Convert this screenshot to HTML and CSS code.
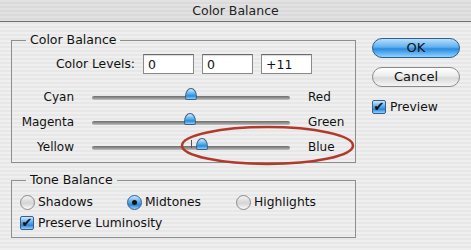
FILE: index.html
```html
<!DOCTYPE html>
<html>
    <head>
        <meta charset="utf-8">
        <link rel="stylesheet" href="styles.css">
    </head>
    <body>
        <div class="dialog">
            <div class="titlebar">Color Balance</div>
            <div class="content">
                <div class="panels">
                    <fieldset class="group">
                        <legend class="group__title">Color Balance</legend>
                        <div class="group__body group__body_balance">
                            <div class="levels">
                                <span class="levels__label">Color Levels:</span>
                                <input class="levels__input" type="text" value="0">
                                <input class="levels__input" type="text" value="0">
                                <input class="levels__input" type="text" value="+11">
                            </div>
                            <div class="slider-row">
                                <span class="slider-row__left">Cyan</span>
                                <div class="track">
                                    <span class="thumb" style="left: 50%"></span>
                                </div>
                                <span class="slider-row__right">Red</span>
                            </div>
                            <div class="slider-row">
                                <span class="slider-row__left">Magenta</span>
                                <div class="track">
                                    <span class="thumb" style="left: 49.5%"></span>
                                </div>
                                <span class="slider-row__right">Green</span>
                            </div>
                            <div class="slider-row">
                                <span class="slider-row__left">Yellow</span>
                                <div class="track">
                                    <span class="track__tick"></span>
                                    <span class="thumb" style="left: 55.5%"></span>
                                </div>
                                <span class="slider-row__right">Blue</span>
                            </div>
                        </div>
                    </fieldset>
                    <fieldset class="group group_tone">
                        <legend class="group__title">Tone Balance</legend>
                        <div class="group__body group__body_tone">
                            <div class="radios">
                                <label class="radio"><span class="radio__dot"></span>Shadows</label>
                                <label class="radio"><span class="radio__dot radio__dot_on"></span>Midtones</label>
                                <label class="radio"><span class="radio__dot"></span>Highlights</label>
                            </div>
                            <label class="check"><span class="check__box">&#10004;</span>Preserve Luminosity</label>
                        </div>
                    </fieldset>
                </div>
                <div class="buttons">
                    <div class="button button_default">OK</div>
                    <div class="button">Cancel</div>
                    <label class="check check_preview"><span class="check__box">&#10004;</span>Preview</label>
                </div>
            </div>
            <!-- red marker drawn over the Yellow/Blue slider -->
            <svg class="mark" width="175" height="42" viewBox="0 0 175 42">
                <ellipse cx="87.5" cy="20.5" rx="85.5" ry="18.5" fill="none" stroke="#b23a2c" stroke-width="2.6"/>
            </svg>
        </div>
    </body>
</html>
```

FILE: styles.css
```css
body, html {
    margin: 0;
    box-sizing: border-box;
    font-family: "DejaVu Sans", "Liberation Sans", sans-serif;
    font-size: 12.3px;
    color: #111;
}

* {
    box-sizing: border-box;
}

.dialog {
    position: relative;
    width: 471px;
    height: 250px;
    overflow: hidden;
    background: repeating-linear-gradient(#efefef 0 2px, #e7e7e7 2px 4px);
}

.mark {
    position: absolute;
    left: 180px;
    top: 125px;
}

.titlebar {
    height: 22px;
    line-height: 21px;
    text-align: center;
    font-size: 12.5px;
    color: #222;
    border-bottom: 1px solid #6e6e6e;
    background: repeating-linear-gradient(#e2e2e2 0 2px, #dadada 2px 4px);
}

.content {
    display: flex;
    padding: 11px 0 0 11px;
}

.panels {
    width: 345px;
}

.group {
    margin: 0;
    padding: 0;
    border: 1px solid #8e8e8e;
    min-width: 0;
}

.group_tone {
    margin-top: 10px;
}

.group__title {
    margin-left: 14px;
    padding: 0 4px;
    line-height: 14px;
    font-size: 12.5px;
}

.group__body_balance {
    padding: 7px 0 3px 0;
}

.group__body_tone {
    padding: 5px 0 4px 8px;
}

.levels {
    display: flex;
    align-items: center;
    height: 20px;
}

.levels__label {
    width: 123px;
    text-align: right;
}

.levels__input {
    width: 51px;
    height: 20px;
    margin-left: 8px;
    padding: 0 4px;
    border: 1px solid #8a8a8a;
    border-top-color: #6a6a6a;
    background-color: #fff;
    box-shadow: inset 0 1px 1px rgba(0, 0, 0, 0.15);
    font-family: "DejaVu Sans", sans-serif;
    font-size: 12.5px;
    color: #111;
    outline: none;
}

.slider-row {
    display: flex;
    align-items: center;
    height: 25px;
}

.levels + .slider-row {
    margin-top: 10px;
}

.slider-row__left {
    width: 62px;
    text-align: right;
    font-size: 12px;
}

.slider-row__right {
    margin-left: 18px;
    font-size: 12px;
}

.track {
    position: relative;
    width: 198px;
    height: 4px;
    margin-left: 18px;
    margin-top: 2px;
    border-radius: 2px;
    background: linear-gradient(#6c6c6c, #9a9a9a 60%, #c4c4c4);
}

.track__tick {
    position: absolute;
    left: 50%;
    top: -6px;
    width: 1px;
    height: 8px;
    background-color: #555;
}

.thumb {
    position: absolute;
    top: -8px;
    width: 12px;
    height: 12px;
    margin-left: -6px;
    border: 1px solid #3f5f80;
    border-radius: 50% 50% 2px 2px / 70% 70% 2px 2px;
    background: linear-gradient(#d6ecff, #5fb2ec 45%, #2a8bd8 70%, #8dd0ff);
}

.radios {
    display: grid;
    grid-template-columns: 107px 109px auto;
    height: 20px;
    align-items: center;
}

.radio, .check {
    display: flex;
    align-items: center;
}

.radio__dot {
    position: relative;
    width: 15px;
    height: 15px;
    margin-right: 3px;
    border: 1px solid #8a8a8a;
    border-radius: 50%;
    background: linear-gradient(#f4f4f4, #d4d4d4 55%, #fafafa);
}

.radio__dot_on {
    border-color: #34608e;
    background: linear-gradient(#cfe8ff, #4ea4e6 50%, #2f86d4 70%, #93d2ff);
}

.radio__dot_on::after {
    content: "";
    position: absolute;
    left: 4px;
    top: 4px;
    width: 5px;
    height: 5px;
    border-radius: 50%;
    background-color: #111;
}

.group__body_tone .check {
    height: 20px;
    margin-top: 1px;
}

.check__box {
    width: 14px;
    height: 14px;
    margin-right: 4px;
    border: 1px solid #34608e;
    border-radius: 2px;
    background: linear-gradient(#cfe8ff, #4ea4e6 50%, #2f86d4 70%, #93d2ff);
    color: #111;
    font-size: 13px;
    line-height: 12px;
    text-align: center;
    overflow: visible;
}

.buttons {
    display: flex;
    flex-direction: column;
    margin-left: 16px;
    padding-top: 5px;
}

.button {
    width: 88px;
    height: 20px;
    line-height: 18px;
    text-align: center;
    font-size: 13px;
    border: 1px solid #8a8a8a;
    border-radius: 10px;
    background: linear-gradient(#ffffff, #ececec 45%, #d9d9d9 55%, #f6f6f6);
}

.button_default {
    border-color: #2f5d8f;
    background: linear-gradient(#b9defd, #5fb0ee 45%, #2a8ae0 55%, #8fd3ff);
}

.button + .button {
    margin-top: 9px;
}

.check_preview {
    height: 20px;
    margin-top: 10px;
}
```
